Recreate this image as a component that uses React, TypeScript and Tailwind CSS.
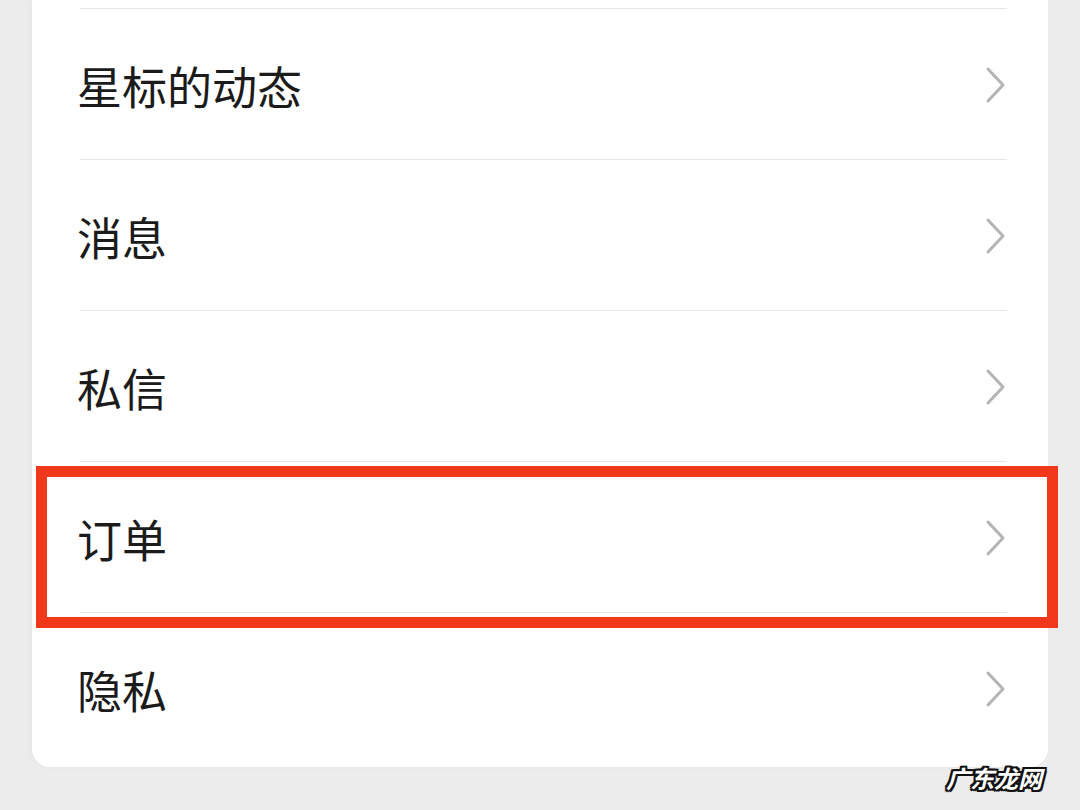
const items = ["星标的动态", "消息", "私信", "订单", "隐私"];

const Chevron = () => (
  <svg width="22" height="38" viewBox="0 0 22 38" fill="none" className="shrink-0">
    <polyline
      points="4,3 19,19 4,35"
      stroke="#b4b4b4"
      strokeWidth="3"
      strokeLinecap="round"
      strokeLinejoin="round"
    />
  </svg>
);

export default function App() {
  return (
    <div
      className="relative h-[810px] w-[1080px] overflow-hidden bg-[#ececec]"
      style={{ fontFamily: '"Noto Sans CJK SC", "Noto Sans", sans-serif' }}
    >
      <div className="ml-[32px] w-[1016px] rounded-b-[18px] bg-white pl-[48px] pr-[41px] pt-[8px] shadow-[-2px_0_6px_rgba(0,0,0,0.03)]">
        {items.map((label, i) => (
          <div
            key={label}
            className={`flex items-center justify-between border-t border-[#e6e6e6] ${
              i === items.length - 1 ? "h-[155px] pb-[4px]" : "h-[151px]"
            }`}
          >
            <span className="-ml-[3px] mt-[2px] text-[45px] leading-none text-[#1b1b1b]">{label}</span>
            <div className="mr-[1px] mt-[2px]">
              <Chevron />
            </div>
          </div>
        ))}
      </div>

      {/* 빨간 강조 박스 */}
      <div className="absolute left-[36px] top-[466px] h-[162px] w-[1022px] border-[11px] border-[#f1381b]" />

      {/* 워터마크 */}
      <div
        className="absolute left-[946px] top-[766px] text-[24px] font-bold italic leading-none text-white"
        style={{
          textShadow:
            "-2px -2px 0 #111, 2px -2px 0 #111, -2px 2px 0 #111, 2px 2px 0 #111, 0 2px 0 #111, 0 -2px 0 #111, 2px 0 0 #111, -2px 0 0 #111",
        }}
      >
        广东龙网
      </div>
    </div>
  );
}
